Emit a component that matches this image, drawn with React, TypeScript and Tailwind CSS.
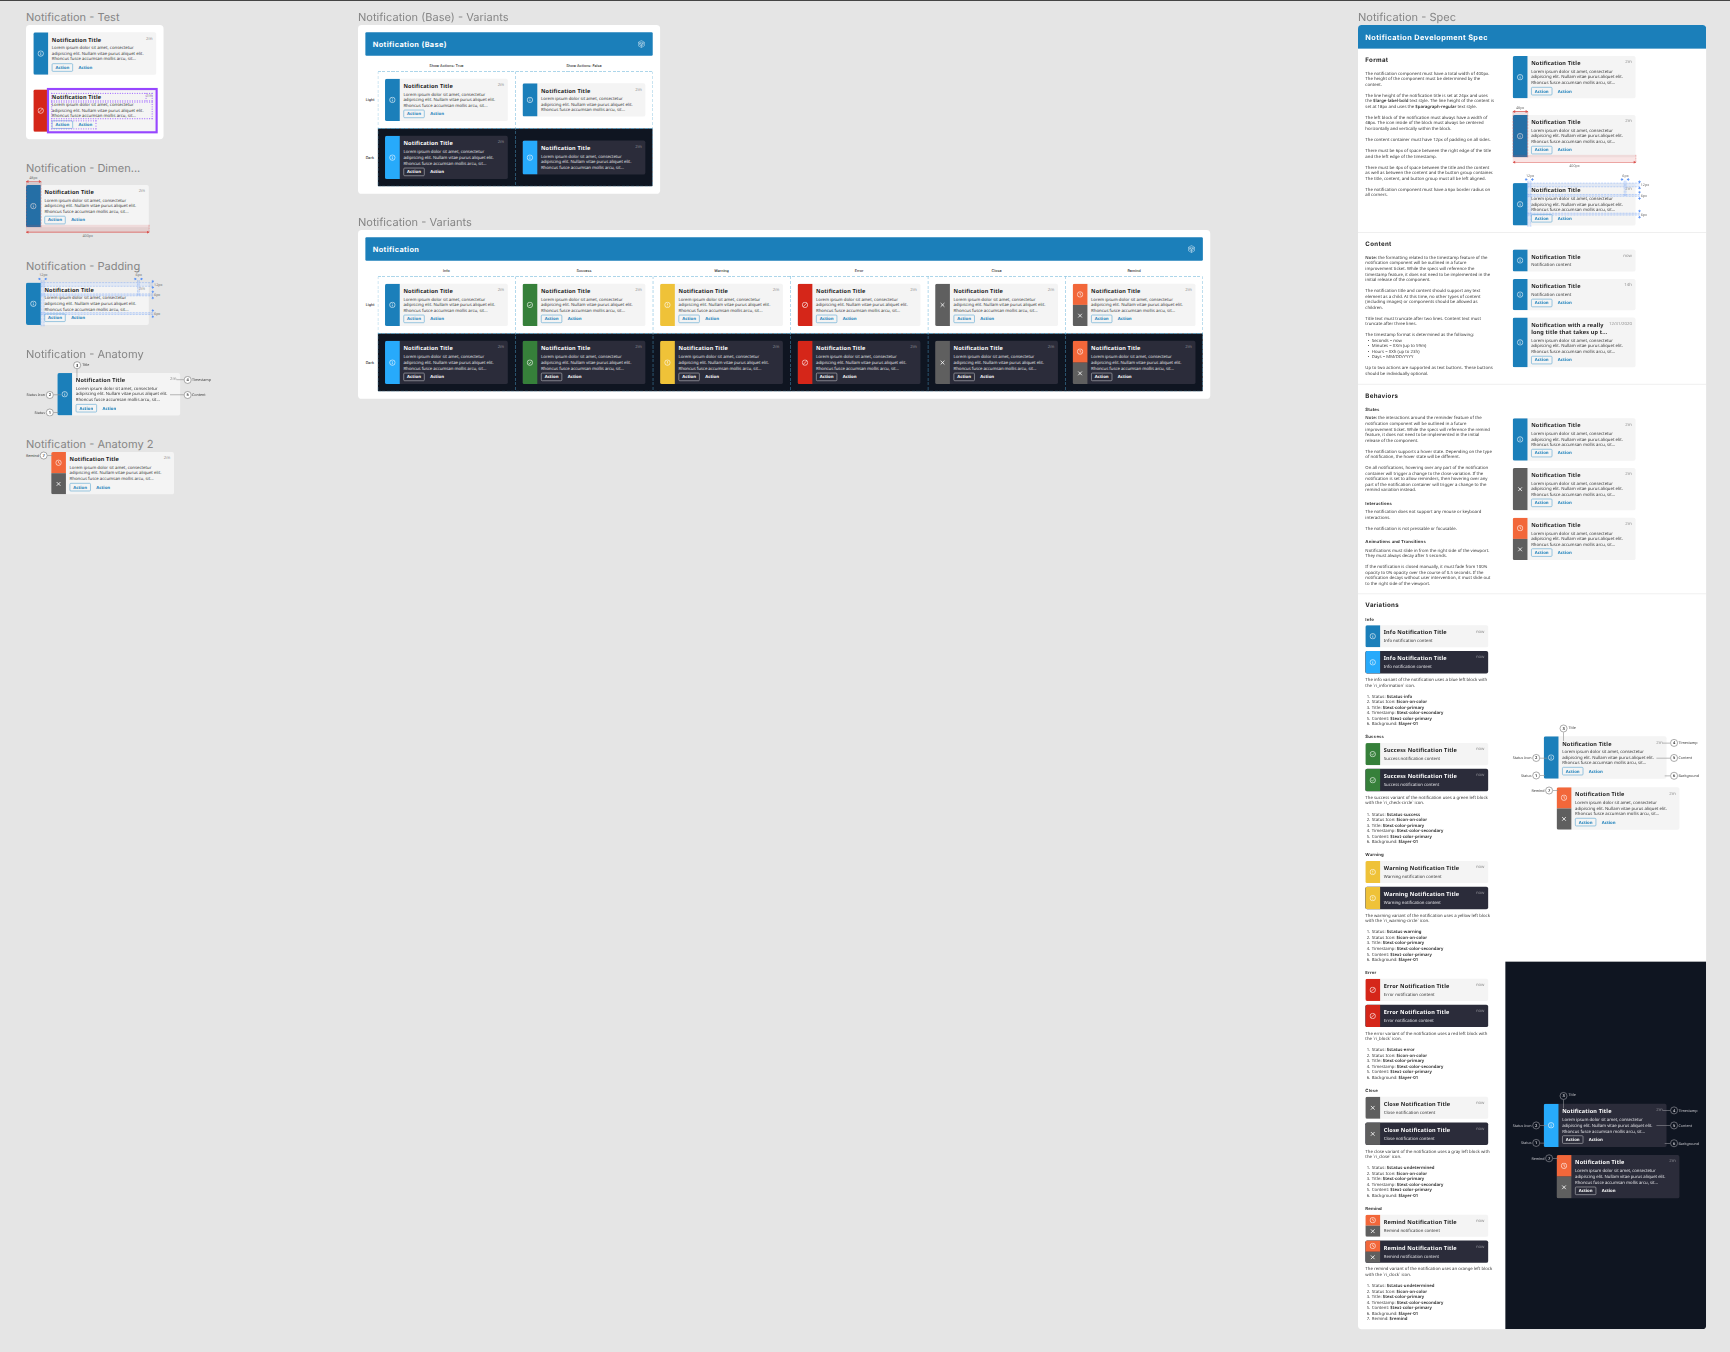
import React from "react";

type Kind = "info" | "success" | "warning" | "error" | "close" | "remind";

const LOREM = [
  "Lorem ipsum dolor sit amet, consectetur",
  "adipiscing elit. Nullam vitae purus aliquet elit.",
  "Rhoncus fusce accumsan mollis arcu, sit...",
];

const blockColor: Record<Kind, string> = {
  info: "bg-[#1b7fba]",
  success: "bg-[#36803a]",
  warning: "bg-[#efc238]",
  error: "bg-[#d52619]",
  close: "bg-[#5f5f5f]",
  remind: "bg-[#f2673a]",
};

function Glyph({ kind }: { kind: Kind }) {
  return (
    <svg viewBox="0 0 20 20" className="size-[22px]" fill="none" stroke="white" strokeWidth="1.8">
      {kind !== "close" && <circle cx="10" cy="10" r="8" />}
      {kind === "info" && <path d="M10 9v5.5M10 5.5v2" />}
      {kind === "warning" && <path d="M10 5.5V11M10 12.8v2" />}
      {kind === "success" && <path d="M6 10.2l2.8 2.8 5-5.4" />}
      {kind === "error" && <path d="M4.6 15.4L15.4 4.6" />}
      {kind === "close" && <path d="M4.5 4.5l11 11M15.5 4.5l-11 11" strokeWidth="2.4" />}
      {kind === "remind" && <path d="M10 5.2V10l3.6 2.6" />}
    </svg>
  );
}

function Block({ kind, dark }: { kind: Kind; dark?: boolean }) {
  if (kind === "remind") {
    return (
      <div className="flex w-12 shrink-0 flex-col">
        <div className="flex flex-1 items-center justify-center bg-[#f2673a]">
          <Glyph kind="remind" />
        </div>
        <div className="flex flex-1 items-center justify-center bg-[#5f5f5f]">
          <Glyph kind="close" />
        </div>
      </div>
    );
  }
  return (
    <div
      className={`flex w-12 shrink-0 items-center justify-center ${
        dark && kind === "info" ? "bg-[#27aafb]" : blockColor[kind]
      }`}
    >
      <Glyph kind={kind} />
    </div>
  );
}

interface CardProps {
  kind?: Kind;
  dark?: boolean;
  title?: string[];
  content?: string[];
  time?: string;
  actions?: boolean;
  children?: React.ReactNode;
}

function Card({
  kind = "info",
  dark,
  title = ["Notification Title"],
  content = LOREM,
  time = "2m",
  actions = true,
  children,
}: CardProps) {
  return (
    <div className="relative w-[400px] shrink-0">
      <div className={`flex overflow-hidden rounded-md ${dark ? "bg-[#2b2c3a]" : "bg-[#f4f4f4]"}`}>
        <Block kind={kind} dark={dark} />
        <div className="flex min-w-0 flex-1 flex-col gap-1.5 p-3">
          <div className="flex justify-between">
            <div
              className={`text-[18px] leading-6 font-bold tracking-[0.5px] ${dark ? "text-white" : "text-[#222]"}`}
            >
              {title.map((t) => (
                <div key={t}>{t}</div>
              ))}
            </div>
            <div className={`text-[14px] leading-4 ${dark ? "text-[#8d8d95]" : "text-[#8d8d8d]"}`}>{time}</div>
          </div>
          <div
            className={`text-[14px] ${
              dark ? "leading-[19px] tracking-[-0.1px] text-[#e0e0e4]" : "leading-[18px] text-[#363636]"
            }`}
          >
            {content.map((t) => (
              <div key={t}>{t}</div>
            ))}
          </div>
          {actions && (
            <div
              className={`flex h-6 items-center gap-1.5 text-[14px] font-bold ${
                dark ? "text-white" : "text-[#1b7fba]"
              }`}
            >
              <div
                className={`flex h-[27px] items-center rounded border-2 px-2.5 ${
                  dark ? "border-[#b5b5bb]" : "border-[#5fa9d3]"
                }`}
              >
                Action
              </div>
              <div className="px-3">Action</div>
            </div>
          )}
        </div>
      </div>
      {children}
    </div>
  );
}

function Frame({ className, children }: { className: string; children: React.ReactNode }) {
  return <div className={`absolute origin-top-left scale-[0.307] ${className}`}>{children}</div>;
}

function FrameLabel({ children }: { children: string }) {
  return (
    <div className="absolute bottom-full left-0 pb-[3px] font-[Inter] text-[36px] leading-[44px] text-[#868686]">
      {children}
    </div>
  );
}

/* Red width measurements over a card. */
function Dimensions() {
  return (
    <div className="absolute inset-0 text-center text-[12px] leading-4 text-[#6f6f6f]">
      <div className="absolute -top-8 left-0 w-12">48px</div>
      <div className="absolute -top-[11px] left-0 h-[149px] w-[50px] border-x-2 border-dashed border-[#d9534f]/60 bg-[#6a0a20]/13" />
      <svg className="absolute -top-4 left-0 h-[10px] w-[50px]" viewBox="0 0 50 10" fill="#d9534f">
        <path d="M0 4h50v2H0z" />
        <path d="M0 5l8-5v10zM50 5l-8-5v10z" />
      </svg>
      <div className="absolute top-[130px] left-0 h-6 w-[402px] border-r-2 border-dashed border-[#d9534f]/60 bg-[#d9534f]/15" />
      <svg className="absolute top-[149px] left-0 h-[10px] w-[402px]" viewBox="0 0 402 10" fill="#d9534f">
        <path d="M0 4h402v2H0z" />
        <path d="M0 5l8-5v10zM402 5l-8-5v10z" />
      </svg>
      <div className="absolute top-[157px] left-0 w-[402px]">400px</div>
    </div>
  );
}

function HArrows({ className }: { className: string }) {
  return (
    <svg className={`absolute h-[10px] w-[30px] ${className}`} viewBox="0 0 30 10" fill="#5b93f5">
      <path d="M10 5L3 0v10zM20 5l7-5v10z" />
      <path d="M0 4h6v2H0zM24 4h6v2h-6z" />
    </svg>
  );
}

function VArrows({ className }: { className: string }) {
  return (
    <svg className={`absolute h-[30px] w-[10px] ${className}`} viewBox="0 0 10 30" fill="#5b93f5">
      <path d="M5 10L0 3h10zM5 20l-5 7h10z" />
      <path d="M4 0v6h2V0zM4 24v6h2v-6z" />
    </svg>
  );
}

/* Blue spacing measurements over a card. */
function Paddings() {
  return (
    <div className="absolute inset-0 text-[12px] leading-4 text-[#6f6f6f]">
      <div className="absolute -top-[32px] left-[43px]">12px</div>
      <div className="absolute -top-[32px] left-[357px]">6px</div>
      <HArrows className="-top-[17px] left-[39px]" />
      <HArrows className="-top-[17px] left-[351px]" />
      <div className="absolute -top-2 left-12 h-[150px] w-3 border-x-2 border-dashed border-[#5b93f5]/40 bg-[#5b93f5]/15" />
      <div className="absolute -top-2 left-[362px] h-[50px] w-2 border-x-2 border-dashed border-[#5b93f5]/40 bg-[#5b93f5]/15" />
      <div className="absolute -top-px left-12 h-[14px] w-[366px] border-y-2 border-dashed border-[#5b93f5]/50 bg-[#5b93f5]/12" />
      <div className="absolute top-9 left-12 h-2 w-[366px] border-y-2 border-dashed border-[#5b93f5]/50 bg-[#5b93f5]/15" />
      <div className="absolute top-[97px] left-12 h-2 w-[366px] border-y-2 border-dashed border-[#5b93f5]/50 bg-[#5b93f5]/15" />
      <VArrows className="-top-[9px] left-[408px]" />
      <VArrows className="top-[25px] left-[408px]" />
      <VArrows className="top-[86px] left-[408px]" />
      <div className="absolute -top-[2px] left-[417px]">12px</div>
      <div className="absolute top-8 left-[417px]">6px</div>
      <div className="absolute top-[94px] left-[417px]">6px</div>
    </div>
  );
}

/* Numbered callout with a leader line; placed by the side it sits on. */
function Callout({ n, label, side, className, dark, line }: {
  n: number;
  label: string;
  side: "left" | "right" | "top";
  className: string;
  line: string;
  dark?: boolean;
}) {
  const stroke = dark ? "bg-[#8d8d95]" : "bg-[#8d8d8d]";
  const circle = (
    <div
      className={`flex size-[25px] shrink-0 items-center justify-center rounded-full border-2 text-[13px] leading-none font-semibold ${
        dark ? "border-[#9a9aa2] bg-[#0f1521] text-[#d8d8dc]" : "border-[#777] bg-white text-[#222]"
      }`}
    >
      {n}
    </div>
  );
  const text = (
    <div className={`text-[12px] leading-4 tracking-[-0.2px] whitespace-nowrap ${dark ? "text-[#c8c8ce]" : "text-[#3a3a3a]"}`}>
      {label}
    </div>
  );
  if (side === "top") {
    return (
      <div className={`absolute flex flex-col ${className}`}>
        <div className="flex items-center gap-1">
          {circle}
          <div className="-mt-1">{text}</div>
        </div>
        <div className={`ml-[11px] w-[2px] ${stroke} ${line}`} />
      </div>
    );
  }
  return (
    <div className={`absolute flex h-6 items-center ${side === "left" ? "justify-end" : ""} ${className}`}>
      {side === "left" ? (
        <>
          <div className="mr-[3px]">{text}</div>
          {circle}
          <div className={`h-[2px] ${stroke} ${line}`} />
        </>
      ) : (
        <>
          <div className={`h-[2px] ${stroke} ${line}`} />
          {circle}
          <div className="ml-0.5">{text}</div>
        </>
      )}
    </div>
  );
}

function AnatomyCallouts({ dark, background }: { dark?: boolean; background?: boolean }) {
  return (
    <>
      <Callout n={3} label="Title" side="top" className="-top-[38px] left-[52px]" line="h-7" dark={dark} />
      <Callout n={2} label="Status Icon" side="left" className="top-[59px] right-[388px]" line="w-6" dark={dark} />
      <Callout n={1} label="Status" side="left" className="top-[116px] right-[396px]" line="w-4" dark={dark} />
      <Callout n={4} label="Timestamp" side="right" className="top-[10px] left-[388px]" line="w-6" dark={dark} />
      <Callout n={5} label="Content" side="right" className="top-[59px] left-[367px]" line="w-[45px]" dark={dark} />
      {background && (
        <Callout n={6} label="Background" side="right" className="top-[117px] left-[394px]" line="w-[18px]" dark={dark} />
      )}
    </>
  );
}

function RemindCallout({ dark }: { dark?: boolean }) {
  return <Callout n={7} label="Remind" side="left" className="-top-px right-[395px]" line="w-[17px]" dark={dark} />;
}

function ComponentIcon() {
  return (
    <svg
      viewBox="0 0 24 24"
      className="size-[26px] opacity-85"
      fill="none"
      stroke="white"
      strokeWidth="1.5"
      strokeLinejoin="round"
    >
      <path d="M12 1.5l9.1 5.25v10.5L12 22.5l-9.1-5.25V6.75z" />
      <path d="M3 7l4 2.3M21 7l-4 2.3M12 22.5V17M7 9.3l5-2.8 5 2.8v5.4L12 17.5l-5-2.8zM7 9.3l5 2.7 5-2.7M12 12v5.5" />
    </svg>
  );
}

const dashX =
  "bg-[repeating-linear-gradient(90deg,#4fa6d2_0_10px,transparent_10px_15px)] absolute h-[2px] inset-x-0";
const dashY =
  "bg-[repeating-linear-gradient(180deg,#4fa6d2_0_10px,transparent_10px_15px)] absolute w-[2px] inset-y-0";

function VariantSheet({ title, heads, cells, columns }: {
  title: string;
  heads: string[];
  cells: { kind: Kind; actions: boolean }[];
  columns: string;
}) {
  return (
    <div className="rounded-xl bg-white p-6">
      <div className="flex h-[76px] items-center justify-between rounded bg-[#1b7fba] px-6">
        <div className="pt-[3px] font-[Inter] text-[24px] font-bold tracking-[1.15px] text-white">{title}</div>
        <ComponentIcon />
      </div>
      <div className={`mt-6 mb-[10px] ml-10 grid h-[17px] ${columns}`}>
        {heads.map((h) => (
          <div key={h} className="pt-px text-center font-[Inter] text-[12px] leading-[17px] font-medium text-[#262626]">
            {h}
          </div>
        ))}
      </div>
      <div className="flex">
        <div className="flex w-10 flex-col font-[Inter] text-[12px] font-medium text-[#262626]">
          <div className="flex h-[186px] items-center pl-px">Light</div>
          <div className="flex h-[189px] items-center pl-px">Dark</div>
        </div>
        <div className="relative overflow-hidden rounded">
          <div className={`grid ${columns}`}>
            {cells.map((c, i) => (
              <div key={i} className="flex h-[186px] items-center justify-center">
                <Card kind={c.kind} actions={c.actions} />
              </div>
            ))}
          </div>
          <div className={`grid bg-[#0f1521] ${columns}`}>
            {cells.map((c, i) => (
              <div key={i} className="flex h-[189px] items-center justify-center">
                <Card kind={c.kind} actions={c.actions} dark />
              </div>
            ))}
          </div>
          <div className={`${dashX} top-0`} />
          <div className={`${dashX} top-[185px]`} />
          <div className={`${dashX} bottom-0 opacity-60`} />
          <div className={`absolute inset-0 grid ${columns}`}>
            {cells.map((_, i) => (
              <div key={i} className="relative">
                <div className={`${dashY} left-0 opacity-70`} />
              </div>
            ))}
          </div>
          <div className={`${dashY} right-0 opacity-70`} />
        </div>
      </div>
    </div>
  );
}

function Rich({ text }: { text: string }) {
  return (
    <>
      {text.split("**").map((part, i) =>
        i % 2 ? (
          <b key={i} className="font-semibold">
            {part}
          </b>
        ) : (
          <span key={i}>{part}</span>
        ),
      )}
    </>
  );
}

function Lines({ lines }: { lines: string[] }) {
  return (
    <div className="text-[14px] leading-[18px] whitespace-nowrap text-[#363636]">
      {lines.map((l, i) =>
        l.startsWith("• ") ? (
          <div key={i} className="flex h-[18px]">
            <span className="w-[21px] pl-2">•</span>
            {l.slice(2)}
          </div>
        ) : (
          <div key={i} className="h-[18px]">
            <Rich text={l} />
          </div>
        ),
      )}
    </div>
  );
}

function Heading({ children }: { children: string }) {
  return (
    <div className="mb-6 h-6 font-[Inter] text-[20px] leading-6 font-bold tracking-[1px] text-[#262626]">
      {children}
    </div>
  );
}

function SubHeading({ children }: { children: string }) {
  return (
    <div className="h-[19px] font-[Inter] text-[14px] leading-[19px] font-bold tracking-[0.4px] text-[#333]">
      {children}
    </div>
  );
}

const formatText = [
  "The notification component must have a total width of 400px.",
  "The height of the component must be determined by the",
  "content.",
  "",
  "The line height of the notification title is set at 24px and uses",
  "the **$large-label-bold** text style. The line height of the content is",
  "set at 18px and uses the **$paragraph-regular** text style.",
  "",
  "The left block of the notification must always have a width of",
  "48px. The icon inside of the block must always be centered",
  "horizontally and vertically within the block.",
  "",
  "The content container must have 12px of padding on all sides.",
  "",
  "There must be 6px of space between the right edge of the title",
  "and the left edge of the timestamp.",
  "",
  "There must be 4px of space between the title and the content",
  "as well as between the content and the button group container.",
  "The title, content, and button group must all be left aligned.",
  "",
  "The notification component must have a 6px border radius on",
  "all corners.",
];

const contentText = [
  "**Note:** the formatting related to the timestamp feature of the",
  "notification component will be outlined in a future",
  "improvement ticket. While the specs will reference the",
  "timestamp feature, it does not need to be implemented in the",
  "initial release of the component.",
  "",
  "The notification title and content should support any text",
  "element as a child. At this time, no other types of content",
  "(including images) or components should be allowed as",
  "children.",
  "",
  "Title text must truncate after two lines. Content text must",
  "truncate after three lines.",
  "",
  "The timestamp format is determined as the following:",
  "• Seconds = now",
  "• Minutes = XXm (up to 59m)",
  "• Hours = XXh (up to 23h)",
  "• Days = MM/DD/YYYY",
  "",
  "Up to two actions are supported as text buttons. These buttons",
  "should be individually optional.",
];

const behaviors: { head: string; lines: string[] }[] = [
  {
    head: "States",
    lines: [
      "**Note:** the interactions around the reminder feature of the",
      "notification component will be outlined in a future",
      "improvement ticket. While the specs will reference the remind",
      "feature, it does not need to be implemented in the initial",
      "release of the component.",
      "",
      "The notification supports a hover state. Depending on the type",
      "of notification, the hover state will be different.",
      "",
      "On all notifications, hovering over any part of the notification",
      "container will trigger a change to the close variation. If the",
      "notification is set to allow reminders, then hovering over any",
      "part of the notification container will trigger a change to the",
      "remind variation instead.",
    ],
  },
  {
    head: "Interactions",
    lines: [
      "The notification does not support any mouse or keyboard",
      "interactions.",
      "",
      "The notification is not pressable or focusable.",
    ],
  },
  {
    head: "Animations and Transitions",
    lines: [
      "Notifications must slide in from the right side of the viewport.",
      "They must always decay after 5 seconds.",
      "",
      "If the notification is closed manually, it must fade from 100%",
      "opacity to 0% opacity over the course of 0.5 seconds. If the",
      "notification decays without user intervention, it must slide out",
      "to the right side of the viewport.",
    ],
  },
];

const variations: { kind: Kind; name: string; text: string[]; status: string }[] = [
  {
    kind: "info",
    name: "Info",
    text: ["The info variant of the notification uses a blue left block with", "the `ri_information` icon."],
    status: "$status-info",
  },
  {
    kind: "success",
    name: "Success",
    text: ["The success variant of the notification uses a green left block", "with the `ri_check-circle` icon."],
    status: "$status-success",
  },
  {
    kind: "warning",
    name: "Warning",
    text: ["The warning variant of the notification uses a yellow left block", "with the `ri_warning-circle` icon."],
    status: "$status-warning",
  },
  {
    kind: "error",
    name: "Error",
    text: ["The error variant of the notification uses a red left block with", "the `ri_block` icon."],
    status: "$status-error",
  },
  {
    kind: "close",
    name: "Close",
    text: ["The close variant of the notification uses a gray left block with", "the `ri_close` icon."],
    status: "$status-undetermined",
  },
  {
    kind: "remind",
    name: "Remind",
    text: ["The remind variant of the notification uses an orange left block", "with the `ri_clock` icon."],
    status: "$status-undetermined",
  },
];

function tokens(kind: Kind, status: string) {
  const rows = [
    ["Status", status],
    ["Status Icon", "$icon-on-color"],
    ["Title", "$text-color-primary"],
    ["Timestamp", "$text-color-secondary"],
    ["Content", "$text-color-primary"],
    ["Background", "$layer-01"],
  ];
  if (kind === "remind") rows.push(["Remind", "$remind"]);
  return rows;
}

function Variation({ v }: { v: (typeof variations)[number] }) {
  const title = [`${v.name} Notification Title`];
  const content = [`${v.name} notification content`];
  return (
    <div>
      <SubHeading>{v.name}</SubHeading>
      <div className="mt-[10px] flex flex-col gap-3">
        <Card kind={v.kind} title={title} content={content} time="now" actions={false} />
        <Card kind={v.kind} title={title} content={content} time="now" actions={false} dark />
      </div>
      <div className="mt-3">
        <Lines lines={[...v.text, ""]} />
        <div className="text-[14px] leading-[18px] text-[#363636]">
          {tokens(v.kind, v.status).map(([k, t], i) => (
            <div key={k} className="flex gap-[5px]">
              <span className="w-4 text-right">{i + 1}.</span>
              <span>
                {k}: <b className="font-semibold tracking-[0.15px] text-[#222]">{t}</b>
              </span>
            </div>
          ))}
        </div>
      </div>
    </div>
  );
}

function AnatomyGroup({ dark }: { dark?: boolean }) {
  return (
    <div className={`flex flex-col pt-9 ${dark ? "gap-[26px]" : "gap-7 pb-1"}`}>
      <div className="pl-[125px]">
        <Card dark={dark}>
          <AnatomyCallouts dark={dark} background />
        </Card>
      </div>
      <div className="pl-[167px]">
        <Card kind="remind" dark={dark}>
          <RemindCallout dark={dark} />
        </Card>
      </div>
    </div>
  );
}

function Spec() {
  return (
    <div className="w-[1134px] overflow-hidden rounded-xl bg-white">
      <div className="flex h-[77px] items-center bg-[#1b7fba] px-6 pt-[2px] font-[Inter] text-[24px] font-bold tracking-[1.2px] text-white">
        Notification Development Spec
      </div>
      <div className="flex border-b-2 border-[#e5e5e5] p-6 pb-[22px]">
        <div className="w-[480px]">
          <Heading>Format</Heading>
          <Lines lines={formatText} />
        </div>
        <div>
          <Card />
          <div className="mt-[54px]">
            <Card>
              <Dimensions />
            </Card>
          </div>
          <div className="mt-[84px]">
            <Card>
              <Paddings />
            </Card>
          </div>
        </div>
      </div>
      <div className="flex items-center border-b-2 border-[#e5e5e5] p-6">
        <div className="w-[480px]">
          <Heading>Content</Heading>
          <Lines lines={contentText} />
        </div>
        <div className="flex flex-col gap-6">
          <Card content={["Notification content"]} time="now" actions={false} />
          <Card content={["Notification content"]} time="14h" />
          <Card title={["Notification with a really", "long title that takes up t..."]} time="12/31/2020" />
        </div>
      </div>
      <div className="flex items-center border-b-2 border-[#e5e5e5] p-6">
        <div className="w-[480px]">
          <Heading>Behaviors</Heading>
          <div className="flex flex-col gap-6">
            {behaviors.map((b) => (
              <div key={b.head} className="flex flex-col gap-[10px]">
                <SubHeading>{b.head}</SubHeading>
                <Lines lines={b.lines} />
              </div>
            ))}
          </div>
        </div>
        <div className="flex flex-col gap-6">
          <Card />
          <Card kind="close" />
          <Card kind="remind" />
        </div>
      </div>
      <div className="flex">
        <div className="w-[480px] py-6 pl-6">
          <Heading>Variations</Heading>
          <div className="flex flex-col gap-6">
            {variations.map((v) => (
              <Variation key={v.kind} v={v} />
            ))}
          </div>
        </div>
        <div className="flex flex-1 flex-col">
          <div className="flex flex-1 flex-col justify-center">
            <AnatomyGroup />
          </div>
          <div className="flex flex-1 flex-col justify-center bg-[#0f1521]">
            <AnatomyGroup dark />
          </div>
        </div>
      </div>
    </div>
  );
}

function Selection() {
  return (
    <div className="absolute -top-[5px] -right-[5px] -bottom-[5px] left-[44px] border-[7px] border-[#9747ff]">
      <div className="absolute top-[9px] right-[9px] left-[7px] h-[28px] border-4 border-dotted border-[#a874ff]" />
      <div className="absolute top-[9px] right-[9px] h-[28px] w-[24px] border-l-4 border-dotted border-[#a874ff]" />
      <div className="absolute top-[37px] right-[9px] left-[7px] h-[58px] border-4 border-dotted border-[#a874ff]" />
      <div className="absolute top-[98px] left-[7px] h-[30px] w-[148px] border-4 border-dotted border-[#a874ff]" />
    </div>
  );
}

const allKinds: Kind[] = ["info", "success", "warning", "error", "close", "remind"];

export default function App() {
  return (
    <div className="relative h-[1352px] w-[1730px] overflow-hidden border-t border-[#444] bg-[#e5e5e5] font-['Noto_Sans',sans-serif] whitespace-nowrap [text-rendering:geometricPrecision]">
      <Frame className="top-[24px] left-[26px]">
        <FrameLabel>Notification - Test</FrameLabel>
        <div className="flex flex-col gap-12 rounded-xl bg-white p-6">
          <Card />
          <Card kind="error">
            <Selection />
          </Card>
        </div>
      </Frame>

      <Frame className="top-[175px] left-[26px]">
        <FrameLabel>Notification - Dimen...</FrameLabel>
        <div className="pt-[29px]">
          <Card>
            <Dimensions />
          </Card>
        </div>
      </Frame>

      <Frame className="top-[273px] left-[26px]">
        <FrameLabel>Notification - Padding</FrameLabel>
        <div className="pt-[28px]">
          <Card>
            <Paddings />
          </Card>
        </div>
      </Frame>

      <Frame className="top-[361px] left-[26px]">
        <FrameLabel>Notification - Anatomy</FrameLabel>
        <div className="pt-9 pl-[102px]">
          <Card>
            <AnatomyCallouts />
          </Card>
        </div>
      </Frame>

      <Frame className="top-[451px] left-[26px]">
        <FrameLabel>Notification - Anatomy 2</FrameLabel>
        <div className="pl-[82px]">
          <Card kind="remind">
            <RemindCallout />
          </Card>
        </div>
      </Frame>

      <Frame className="top-[24px] left-[358px]">
        <FrameLabel>Notification (Base) - Variants</FrameLabel>
        <VariantSheet
          title="Notification (Base)"
          heads={["Show Actions: True", "Show Actions: False"]}
          cells={[
            { kind: "info", actions: true },
            { kind: "info", actions: false },
          ]}
          columns="grid-cols-[repeat(2,448px)]"
        />
      </Frame>

      <Frame className="top-[229.3px] left-[358px]">
        <FrameLabel>Notification - Variants</FrameLabel>
        <VariantSheet
          title="Notification"
          heads={["Info", "Success", "Warning", "Error", "Close", "Remind"]}
          cells={allKinds.map((kind) => ({ kind, actions: true }))}
          columns="grid-cols-[repeat(6,448px)]"
        />
      </Frame>

      <Frame className="top-[24px] left-[1357.7px]">
        <FrameLabel>Notification - Spec</FrameLabel>
        <Spec />
      </Frame>
    </div>
  );
}
